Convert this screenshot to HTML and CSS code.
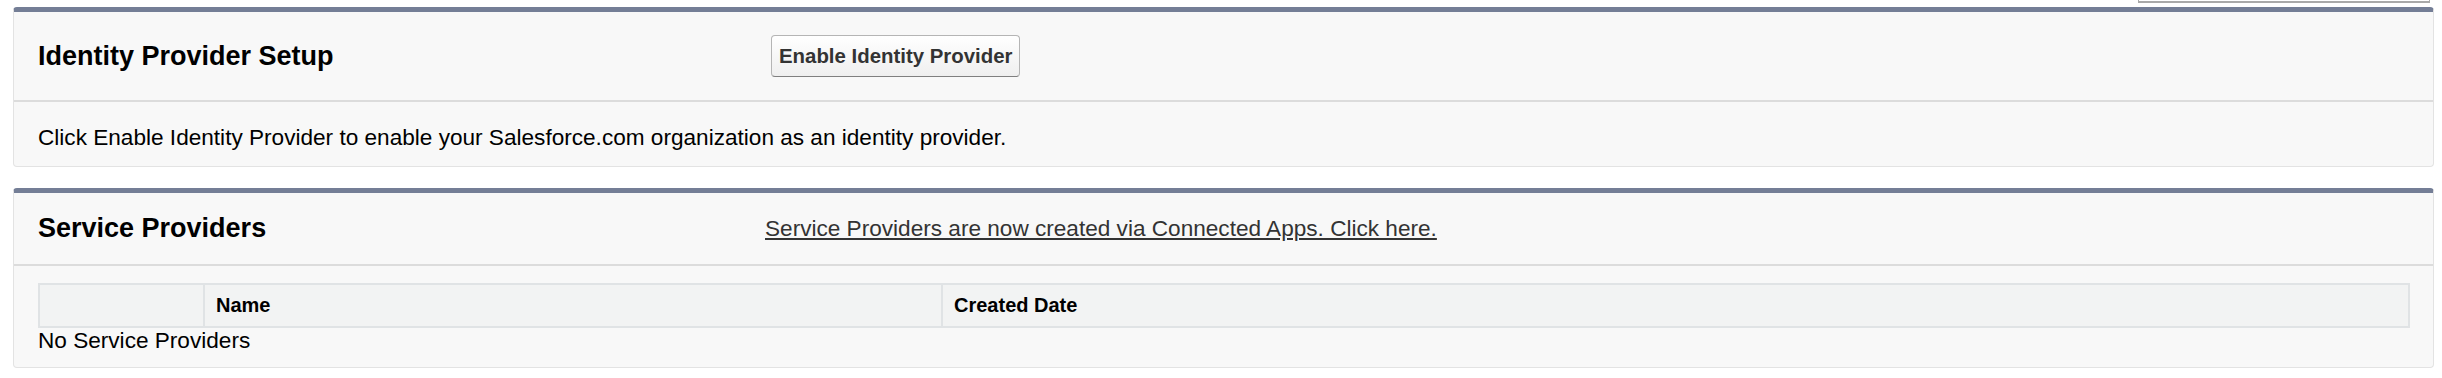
FILE: index.html
```html
<!DOCTYPE html>
<html lang="en">
<head>
    <meta charset="UTF-8">
    <meta name="viewport" content="width=device-width, initial-scale=1.0">
    <title>Identity Provider</title>
    <link rel="stylesheet" href="styles.css">
</head>
<body>
    <div class="topbar">
        <div class="search-box"></div>
    </div>

    <div class="block">
        <div class="block-header">
            <h2>Identity Provider Setup</h2>
            <div class="header-btns">
                <button class="btn">Enable Identity Provider</button>
            </div>
        </div>
        <div class="block-body">
            Click Enable Identity Provider to enable your Salesforce.com organization as an identity provider.
        </div>
    </div>

    <div class="block">
        <div class="block-header short">
            <h2>Service Providers</h2>
            <div class="header-btns">
                <a href="#" class="header-link">Service Providers are now created via Connected Apps. Click here.</a>
            </div>
        </div>
        <div class="block-body list-body">
            <table class="list">
                <thead>
                    <tr>
                        <th class="action-col"></th>
                        <th class="name-col">Name</th>
                        <th>Created Date</th>
                    </tr>
                </thead>
            </table>
            <div class="no-rows">No Service Providers</div>
        </div>
    </div>
</body>
</html>
```

FILE: styles.css
```css
body {
    margin: 0;
    padding: 0 8px 0 13px;
    font-family: "Liberation Sans", Arial, sans-serif;
    font-size: 22.6px;
    line-height: 26px;
    color: #000;
    background: #fff;
}
.topbar {
    display: flex;
    justify-content: flex-end;
    height: 4px;
    margin-bottom: 3px;
}
.search-box {
    width: 290px;
    height: 1px;
    margin-right: 4px;
    border: 1px solid #a9a9a9;
    border-top: none;
    border-bottom-width: 2px;
}
.block {
    background: #f8f8f8;
    border: 1px solid #e3e3e3;
    border-top: 5px solid #747e96;
    border-radius: 4px;
    margin-bottom: 21px;
}
.block-header {
    display: grid;
    grid-template-columns: 727px 1fr;
    align-items: center;
    padding: 20px 24px;
    border-bottom: 2px solid #dcdcdc;
}
.block-header h2 {
    margin: 0;
    font-size: 27px;
    line-height: 31px;
    font-weight: bold;
}
.btn {
    margin: 3px 0 3px 6px;
    padding: 8px 7px;
    font-family: "Liberation Sans", Arial, sans-serif;
    font-size: 20.4px;
    line-height: 24px;
    font-weight: bold;
    color: #333;
    background: linear-gradient(#ffffff, #efefef);
    border: 1px solid #b5b5b5;
    border-bottom-color: #7f7f7f;
    border-radius: 4px;
    cursor: pointer;
}
.header-link {
    color: #333;
    text-decoration: underline;
}
.block-body {
    padding: 23px 23px 15px 24px;
}
.list-body {
    padding-top: 17px;
    padding-bottom: 13px;
}
table.list {
    width: 100%;
    border-collapse: collapse;
}
table.list th {
    background: #f2f3f3;
    border: 2px solid #e0e3e5;
    padding: 9px 11px;
    font-size: 20px;
    line-height: 23px;
    font-weight: bold;
    text-align: left;
}
.action-col { width: 141px; }
.name-col { width: 714px; }
.no-rows { line-height: 26px; }
```
